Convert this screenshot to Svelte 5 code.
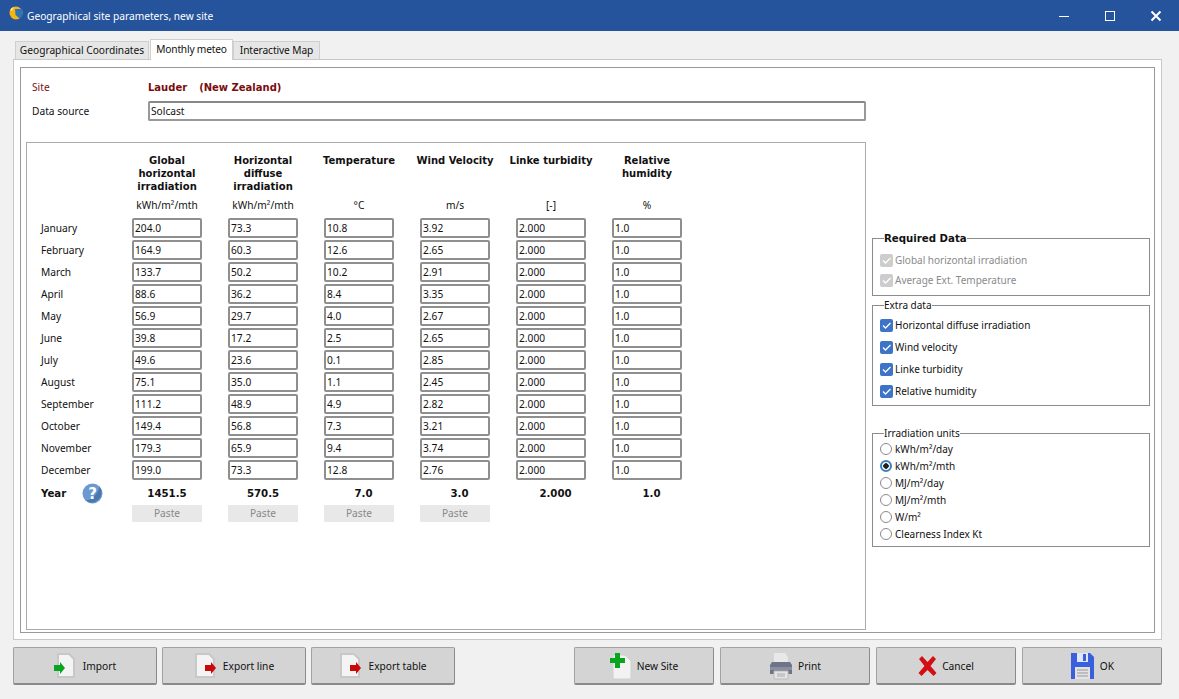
<script>
  const months = [
    ['January', '204.0', '73.3', '10.8', '3.92'],
    ['February', '164.9', '60.3', '12.6', '2.65'],
    ['March', '133.7', '50.2', '10.2', '2.91'],
    ['April', '88.6', '36.2', '8.4', '3.35'],
    ['May', '56.9', '29.7', '4.0', '2.67'],
    ['June', '39.8', '17.2', '2.5', '2.65'],
    ['July', '49.6', '23.6', '0.1', '2.85'],
    ['August', '75.1', '35.0', '1.1', '2.45'],
    ['September', '111.2', '48.9', '4.9', '2.82'],
    ['October', '149.4', '56.8', '7.3', '3.21'],
    ['November', '179.3', '65.9', '9.4', '3.74'],
    ['December', '199.0', '73.3', '12.8', '2.76']
  ]

  const headers = [
    { title: 'Global horizontal irradiation', unit: 'kWh/m²/mth', narrow: true },
    { title: 'Horizontal diffuse irradiation', unit: 'kWh/m²/mth', narrow: true },
    { title: 'Temperature', unit: '°C' },
    { title: 'Wind Velocity', unit: 'm/s' },
    { title: 'Linke turbidity', unit: '[-]' },
    { title: 'Relative humidity', unit: '%', narrow: true }
  ]

  const totals = ['1451.5', '570.5', '7.0', '3.0', '2.000', '1.0']
  const extra = ['Horizontal diffuse irradiation', 'Wind velocity', 'Linke turbidity', 'Relative humidity']
  const units = ['kWh/m²/day', 'kWh/m²/mth', 'MJ/m²/day', 'MJ/m²/mth', 'W/m²', 'Clearness Index Kt']
</script>

<div class="window">
  <header class="titlebar">
    <svg class="logo" width="14" height="14" viewBox="0 0 14 14">
      <circle cx="7" cy="7" r="6.500" fill="#f5b50f" />
      <path d="M6 3h7.500v5a6.500 6.500 0 0 1-3 4.500L6.500 9z" fill="#2f74b5" />
      <path d="M1 4a6.500 6.500 0 0 1 4-3.300L3 5z" fill="#ffe48a" />
    </svg>
    <span class="title">Geographical site parameters, new site</span>
    <div class="controls">
      <svg width="12" height="12" viewBox="0 0 12 12"><path d="M1 6.500h10" stroke="#fff" stroke-width="1" /></svg>
      <svg width="12" height="12" viewBox="0 0 12 12"><rect x="1.500" y="1.500" width="9" height="9" fill="none" stroke="#fff" /></svg>
      <svg width="12" height="12" viewBox="0 0 12 12"><path d="M1.500 1.500l9 9M10.500 1.500l-9 9" stroke="#fff" stroke-width="2" /></svg>
    </div>
  </header>

  <div class="tabs">
    <div class="tab first">Geographical Coordinates</div>
    <div class="tab active">Monthly meteo</div>
    <div class="tab last">Interactive Map</div>
  </div>

  <main class="panel">
    <div class="inner">
      <div class="left">
        <div class="site-row">
          <span class="field-label site-label">Site</span>
          <strong class="site-name">Lauder</strong>
          <strong class="site-name country">(New Zealand)</strong>
        </div>
        <div class="source-row">
          <span class="field-label">Data source</span>
          <div class="input source">Solcast</div>
        </div>

        <section class="table-box">
          <div class="grid">
            <div></div>
            {#each headers as h}
              <div class="head" class:narrow={h.narrow}>{h.title}</div>
            {/each}
            <div></div>
            {#each headers as h}
              <div class="unit">{h.unit}</div>
            {/each}

            {#each months as m}
              <div class="month">{m[0]}</div>
              {#each m.slice(1) as v}
                <div class="input">{v}</div>
              {/each}
              <div class="input">2.000</div>
              <div class="input">1.0</div>
            {/each}

            <div class="year">
              <strong>Year</strong>
              <svg class="help" width="21" height="21" viewBox="0 0 21 21">
                <circle cx="10.500" cy="10.500" r="10" fill="#6a9ad0" />
                <path d="M17.500 3.500a10 10 0 0 1-14 14c6 0 12-6 14-14z" fill="#4a78ae" />
                <text x="10.500" y="16" text-anchor="middle" class="help-mark">?</text>
              </svg>
            </div>
            {#each totals as t, i}
              <div class="total" class:shifted={i > 1}>{t}</div>
            {/each}

            <div></div>
            {#each [0, 1, 2, 3] as _}
              <div class="paste">Paste</div>
            {/each}
          </div>
        </section>
      </div>

      <aside class="right">
        <fieldset class="required">
          <legend><strong>Required Data</strong></legend>
          <label class="check disabled">
            <span class="box"><svg width="13" height="13" viewBox="0 0 13 13"><path d="M3 6.500l2.500 2.500 5-5" fill="none" stroke="#fff" stroke-width="1.300" /></svg></span>
            Global horizontal irradiation
          </label>
          <label class="check disabled">
            <span class="box"><svg width="13" height="13" viewBox="0 0 13 13"><path d="M3 6.500l2.500 2.500 5-5" fill="none" stroke="#fff" stroke-width="1.300" /></svg></span>
            Average Ext. Temperature
          </label>
        </fieldset>

        <fieldset class="extra">
          <legend>Extra data</legend>
          {#each extra as e}
            <label class="check">
              <span class="box"><svg width="13" height="13" viewBox="0 0 13 13"><path d="M3 6.500l2.500 2.500 5-5" fill="none" stroke="#fff" stroke-width="1.300" /></svg></span>
              {e}
            </label>
          {/each}
        </fieldset>

        <fieldset class="units">
          <legend>Irradiation units</legend>
          {#each units as u, i}
            <label class="radio">
              <span class="dot" class:on={i === 1}></span>
              {u}
            </label>
          {/each}
        </fieldset>
      </aside>
    </div>
  </main>

  <footer class="buttons">
    <button>
      <svg width="24" height="25" viewBox="0 0 24 25"><path d="M4 1h11l5 5v18H4z" fill="#f4f4f4" stroke="#c8c8c8" stroke-width="2" /><path d="M0 12h6V9l5 6-5 6v-3H0z" fill="#0aa51e" /></svg>
      Import
    </button>
    <button>
      <svg width="24" height="25" viewBox="0 0 24 25"><path d="M2 1h13l5 5v18H2z" fill="#f4f4f4" stroke="#c8c8c8" stroke-width="2" /><path d="M11 12h6V9l5 6-5 6v-3h-6z" fill="#c80a0a" /></svg>
      Export line
    </button>
    <button>
      <svg width="24" height="25" viewBox="0 0 24 25"><path d="M2 1h13l5 5v18H2z" fill="#f4f4f4" stroke="#c8c8c8" stroke-width="2" /><path d="M11 12h6V9l5 6-5 6v-3h-6z" fill="#c80a0a" /></svg>
      Export table
    </button>
    <div class="spacer"></div>
    <button class="new-site">
      <svg width="22" height="28" viewBox="0 0 22 28"><path d="M3 3h12l6 6v18H3z" fill="#f2f2f2" stroke="#d0d0d0" /><path d="M5 1h5v5h5v5h-5v5H5v-5H0V6h5z" fill="#0aa51e" /></svg>
      New Site
    </button>
    <button class="print">
      <svg width="24" height="28" viewBox="0 0 24 28"><path d="M5 1h11l3 4v6H5z" fill="#e8e8e8" /><path d="M3 10h18l2 3v9H1v-9z" fill="#6f7488" /><path d="M1 15h22v3H1z" fill="#8a8fa0" /><path d="M5 19h14v8H5z" fill="#e4e4e4" stroke="#bbb" /><path d="M8 22h8M8 24h8" stroke="#aaa" /></svg>
      Print
    </button>
    <button class="cancel">
      <svg width="19" height="22" viewBox="0 0 19 22"><path d="M1 4l3-3 5.500 6L15 1l3 3-5.500 7 6 7-3 3-6-6-6 6-3-3 6-7z" fill="#d40f14" /></svg>
      Cancel
    </button>
    <button class="ok">
      <svg width="25" height="28" viewBox="0 0 25 28"><path d="M1 1h19l4 4v22H1z" fill="#3a5fdc" /><path d="M7 1h11v9H7z" fill="#dfe6fa" /><path d="M13 2h3v7h-3z" fill="#3a5fdc" /><path d="M5 15h15v12H5z" fill="#e2e2e2" /><path d="M7 18h11M7 21h11M7 24h11" stroke="#999" /></svg>
      OK
    </button>
  </footer>
</div>

<style>
  :global(body) {
    margin: 0;
    background: #f1f1f1;
  }

  .window {
    width: 1179px;
    height: 699px;
    display: flex;
    flex-direction: column;
    font-family: "Noto Sans", "DejaVu Sans", sans-serif;
    font-size: 10.200px;
    color: #111;
    overflow: hidden;
  }

  strong,
  .total {
    font-family: "DejaVu Sans", sans-serif;
    font-weight: bold;
    font-size: 10.200px;
  }

  .titlebar {
    height: 31px;
    flex: none;
    background: #26549c;
    color: #fff;
    display: flex;
    align-items: center;
    padding-left: 9px;
    box-sizing: border-box;
  }

  .logo {
    margin: -6px 4px 0 0;
  }

  .controls {
    margin-left: auto;
    display: flex;
    gap: 34px;
    padding-right: 17px;
  }

  .tabs {
    display: flex;
    align-items: flex-end;
    height: 28px;
    flex: none;
    padding-left: 15px;
    box-sizing: border-box;
  }

  .tab {
    height: 18px;
    line-height: 17px;
    text-align: center;
    white-space: nowrap;
    background: #e6e6e6;
    border: 1px solid #cfcfcf;
    border-bottom: none;
    margin-left: 1px;
    box-sizing: border-box;
  }

  .tab.first {
    margin-left: 0;
    width: 134px;
  }

  .tab.active {
    width: 83px;
    height: 21px;
    line-height: 18px;
    background: #fff;
    margin-bottom: -1px;
    letter-spacing: -0.2px;
    position: relative;
    z-index: 1;
  }

  .tab.last {
    width: 87px;
    margin-left: 0;
    letter-spacing: -0.1px;
  }

  .panel {
    margin: 0 17px 0 13px;
    height: 581px;
    flex: none;
    background: #fff;
    border: 1px solid #c8c8c8;
    box-sizing: border-box;
    padding: 7px 6px 6px;
  }

  .inner {
    height: 100%;
    border: 1px solid #999;
    box-sizing: border-box;
    display: flex;
    padding: 0 4px 2px 5px;
  }

  .left {
    width: 840px;
    flex: none;
    display: flex;
    flex-direction: column;
  }

  .site-row {
    display: flex;
    align-items: center;
    height: 14px;
    margin-top: 12px;
    padding-left: 6px;
  }

  .field-label {
    width: 116px;
    flex: none;
  }

  .site-label {
    color: #7a1010;
  }

  .site-name {
    color: #7a0c0c;
    font-size: 10px;
  }

  .country {
    margin-left: 12px;
  }

  .source-row {
    display: flex;
    align-items: center;
    margin-top: 7px;
    padding-left: 6px;
  }

  .input {
    height: 20px;
    line-height: 16px;
    border: 2px solid #8f8f8f;
    border-radius: 2px;
    padding-left: 1px;
    box-sizing: border-box;
    background: #fff;
    white-space: nowrap;
  }

  .source {
    flex: 1;
    border-color: #999;
    border-top-color: #888;
  }

  .table-box {
    margin-top: 21px;
    flex: 1;
    width: 840px;
    box-sizing: border-box;
    border: 1px solid #aaa;
    padding: 11px 0 0 14px;
  }

  .grid {
    display: grid;
    column-gap: 26px;
    grid-template-columns: 65px repeat(6, 70px);
    grid-template-rows: 42px 18px repeat(12, 20px) 21px 17px;
    row-gap: 2px;
  }

  .grid > .head {
    font-family: "DejaVu Sans", sans-serif;
    font-weight: bold;
    font-size: 10px;
    line-height: 13px;
    text-align: center;
    margin: 0 -10px;
  }

  .head.narrow {
    padding: 0 14px;
  }

  .unit {
    text-align: center;
    line-height: 14px;
  }

  .month {
    line-height: 20px;
  }

  .year {
    display: flex;
    align-items: center;
    height: 21px;
    margin-top: 1px;
  }

  .help {
    margin-left: 16px;
    flex: none;
  }

  .help-mark {
    font-family: "DejaVu Sans", sans-serif;
    font-size: 15px;
    font-weight: bold;
    fill: #fff;
  }

  .total {
    text-align: center;
    line-height: 23px;
  }

  .total.shifted {
    padding-left: 9px;
  }

  .paste {
    height: 17px;
    line-height: 17px;
    background: #e8e8e8;
    color: #888;
    text-align: center;
  }

  .right {
    width: 278px;
    margin-left: 6px;
    display: flex;
    flex-direction: column;
    font-size: 10px;
  }

  fieldset {
    margin: 0;
    padding: 0 0 0 7px;
    border: 1px solid #8c8c8c;
    box-sizing: border-box;
    min-width: 0;
  }

  legend {
    padding: 0;
    margin-left: 4px;
    line-height: 12px;
  }

  .required {
    margin-top: 164px;
    height: 64px;
  }

  .extra {
    margin-top: 3px;
    height: 107px;
  }

  .units {
    margin-top: 21px;
    height: 120px;
  }

  .check,
  .radio {
    display: flex;
    align-items: center;
    white-space: nowrap;
  }

  .check {
    gap: 2px;
    height: 22px;
  }

  .required .check {
    height: 20px;
  }

  .required .check:first-of-type {
    margin-top: 5px;
  }

  .extra .check:first-of-type {
    margin-top: 3px;
  }

  .check.disabled {
    color: #8a8a8a;
  }

  .box {
    width: 13px;
    height: 13px;
    background: #3e74c8;
    border-radius: 2px;
    display: block;
    flex: none;
  }

  .box svg {
    display: block;
  }

  .disabled .box {
    background: #cdcdcd;
  }

  .radio {
    gap: 3px;
    height: 17px;
  }

  .units .radio:first-of-type {
    margin-top: 1px;
  }

  .dot {
    width: 12px;
    height: 12px;
    border: 1px solid #8a8a8a;
    border-radius: 50%;
    box-sizing: border-box;
    background: #fff;
    flex: none;
  }

  .dot.on {
    border: 2px solid #3a7fc0;
    background: radial-gradient(circle, #222 0 2.500px, #fff 3px);
  }

  .buttons {
    display: flex;
    gap: 5px;
    margin-top: 7px;
    padding: 0 17px 0 13px;
    height: 38px;
  }

  .spacer {
    flex: 1;
  }

  button {
    width: 144px;
    height: 38px;
    flex: none;
    background: #d4d4d4;
    border: 1px solid #a2a2a2;
    border-bottom: 2px solid #8a8a8a;
    border-right-color: #8a8a8a;
    border-radius: 2px;
    font: inherit;
    color: #111;
    display: flex;
    align-items: center;
    justify-content: center;
    gap: 5px;
    padding: 0;
  }

  .new-site { width: 140px; }
  .print { width: 150px; margin-left: 1px; }
  .cancel { width: 140px; margin-left: 1px; }
  .ok { width: 140px; margin-left: 1px; }
</style>
